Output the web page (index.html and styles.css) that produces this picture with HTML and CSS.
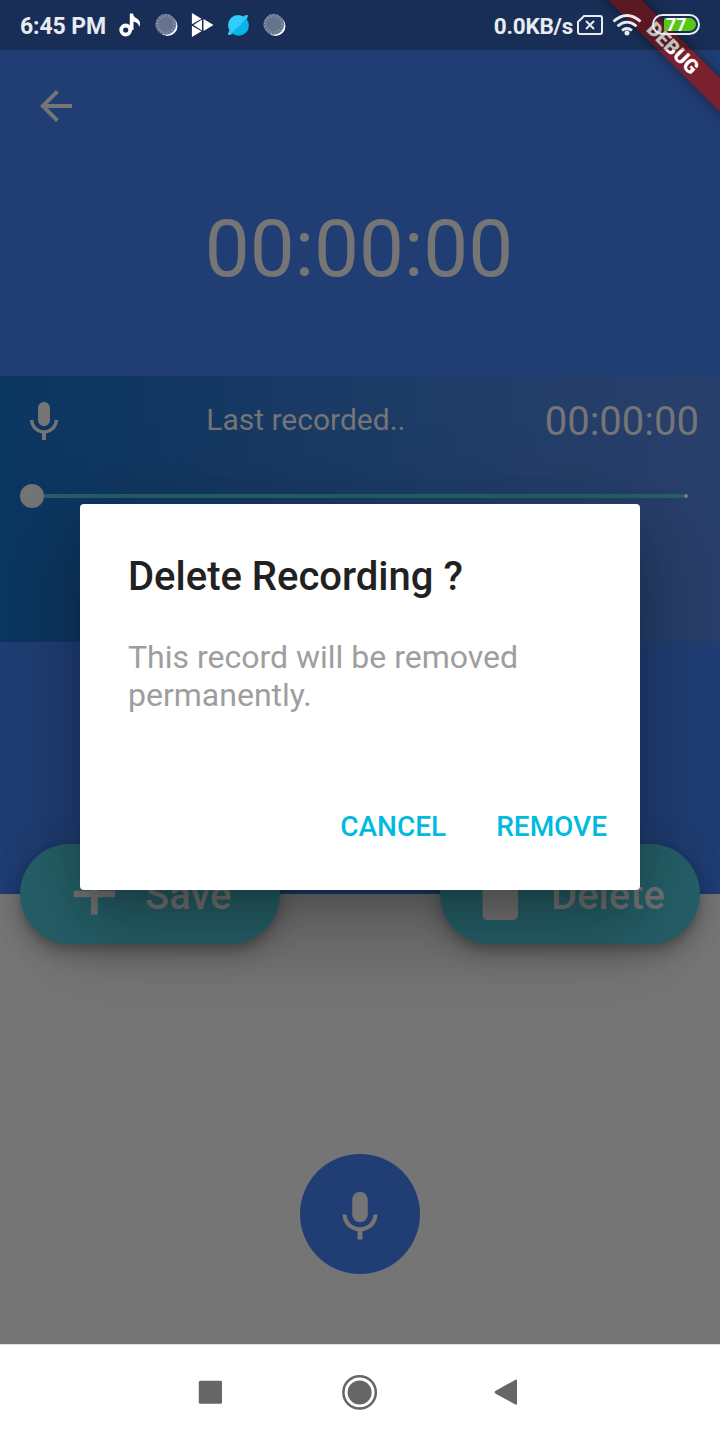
FILE: index.html
```html
<!DOCTYPE html>
<html lang="en">
<head>
<meta charset="utf-8">
<title>Recorder</title>
<link rel="stylesheet" href="styles.css">
</head>
<body>
<div class="phone">
  <main class="app">
    <header class="header">
      <svg class="back" width="48" height="48" viewBox="0 0 24 24"><path d="M20 11H7.83l5.59-5.59L12 4l-8 8 8 8 1.41-1.41L7.83 13H20v-2z"/></svg>
      <div class="timer">00:00:00</div>
    </header>
    <section class="player">
      <div class="player-row">
        <svg class="mic" width="48" height="48" viewBox="0 0 24 24"><path d="M12 14c1.66 0 2.99-1.34 2.99-3L15 5c0-1.66-1.34-3-3-3S9 3.34 9 5v6c0 1.66 1.34 3 3 3zm5.300-3c0 3-2.540 5.100-5.300 5.100S6.700 14 6.700 11H5c0 3.410 2.720 6.230 6 6.720V21h2v-3.280c3.280-.480 6-3.300 6-6.720h-1.700z"/></svg>
        <span class="caption">Last recorded..</span>
        <span class="length">00:00:00</span>
      </div>
      <div class="slider"><span class="thumb"></span><span class="track"></span><span class="tick"></span></div>
    </section>
    <div class="actions">
      <button class="pill save">
        <svg width="60" height="60" viewBox="0 0 24 24"><path d="M20.400 12.900h-6.900v7h-2.700v-7H3.900v-2.600h6.900v-7h2.700v7h6.900v2.600z"/></svg>
        <span>Save</span>
      </button>
      <button class="pill delete">
        <svg width="60" height="60" viewBox="0 0 24 24"><path d="M5 20c0 1.100.9 2 2 2h10.200c1.100 0 2-.9 2-2V7H5v13zM20 4h-3.500l-1-1h-5l-1 1H6v2h14V4z"/></svg>
        <span>Delete</span>
      </button>
    </div>
    <div class="record-area">
      <button class="record">
        <svg width="60" height="60" viewBox="0 0 24 24"><path d="M12 14.100c1.660 0 3.100-1.440 3.100-3.100V5c0-1.660-1.440-3.100-3.100-3.100S8.900 3.340 8.900 5v6c0 1.660 1.440 3.100 3.100 3.100zm5.300-3.100c0 3-2.540 5.100-5.300 5.100S6.700 14 6.700 11H5c0 3.410 2.720 6.230 6 6.720V21h2v-3.280c3.280-.480 6-3.300 6-6.720h-1.700z"/></svg>
      </button>
    </div>
  </main>
  <nav class="navbar">
    <svg width="24" height="24" viewBox="0 0 24 24"><rect x=".8" y=".8" width="23.200" height="23" rx="1.500"/></svg>
    <svg class="home" width="36" height="36" viewBox="0 0 36 36"><circle class="ring" cx="17.600" cy="18.400" r="16.200"/><circle cx="17.600" cy="18.400" r="12"/></svg>
    <svg width="24" height="26" viewBox="0 0 24 26"><path d="M21.500.7Q23 .2 23 1.300v23.600q0 1.100-1.500.6L1.300 14.500Q-.2 13.300 1.300 12.100z"/></svg>
  </nav>

  <div class="banner">DEBUG</div>

  <div class="statusbar">
    <span class="clock">6:45 PM</span>
    <div class="notices">
      <svg width="24" height="24" viewBox="0 0 24 24"><circle class="note" cx="6.700" cy="17" r="4.500"/><path d="M10.800.5h3.200c.4 2.500 1.600 3.700 3.500 4.800 2.500 1.400 3.700 3.300 3.500 6-.1 1.200-.4 1.900-.8 2.500-.5-2.800-2.700-4.800-5.700-5.300v8.500h-3.700z"/></svg>
      <svg width="24" height="24" viewBox="0 0 24 24"><circle cx="12.500" cy="13" r="10" class="moon"/><circle cx="10.800" cy="11.300" r="10.500" class="disc"/><circle cx="10.800" cy="11.300" r="8.500" class="dial"/></svg>
      <svg width="24" height="26" viewBox="0 0 24 26"><path d="M.9 1l9.600 5.700L.9 12.200zM.9 25l9.600-5.700-9.600-5.500zM12.500 7L22.500 13l-10 6zM11 7.500v11L2.500 13z"/></svg>
      <svg width="24" height="24" viewBox="0 0 24 24"><circle cx="11" cy="12" r="10" class="planet"/><path class="planet" d="M16 3.200l3.500-1.200h1.200v1.500L19.500 7zM6 20.800L2.500 22H1v-1.500L2.500 17z"/><path class="shade" d="M19 5.500A10 10 0 0 1 4.500 19.600Q12.500 14 19 5.500Z"/></svg>
      <svg width="24" height="24" viewBox="0 0 24 24"><circle cx="12.500" cy="13" r="10" class="moon"/><circle cx="10.800" cy="11.300" r="10.500" class="disc"/><circle cx="10.800" cy="11.300" r="8.500" class="dial"/></svg>
    </div>
    <span class="speed">0.0KB/s</span>
    <svg class="sim" width="26" height="20" viewBox="0 0 26 20"><path d="M7 1h16a2 2 0 0 1 2 2v14a2 2 0 0 1-2 2H3a2 2 0 0 1-2-2V7zM9 6l8 8M17 6l-8 8"/></svg>
    <svg class="wifi" width="30" height="22" viewBox="0 0 30 22"><path d="M1.500 7.500Q15-4.500 28.500 7.500M5.500 12.200Q15 4 24.500 12.200M10 16.500Q15 12.500 20 16.500"/><circle cx="15" cy="19" r="2.500"/></svg>
    <div class="battery"><span class="charge">77</span></div>
  </div>

  <div class="dialog" role="dialog">
    <h1>Delete Recording ?</h1>
    <p>This record will be removed permanently.</p>
    <div class="dialog-actions"><button>CANCEL</button><button>REMOVE</button></div>
  </div>
</div>
</body>
</html>
```
FILE: styles.css
```css
* { box-sizing: border-box; }
body { margin: 0; font-family: Roboto, sans-serif; }
button { border: 0; padding: 0; background: none; font: inherit; color: inherit; }
svg { display: block; flex: none; }

.phone { position: relative; width: 720px; height: 1440px; overflow: hidden; background: #fff; }

.app { isolation: isolate; display: flex; flex-direction: column; height: 1344px; background: #203e74; color: #757575; fill: #757575; }

.header { height: 376px; padding: 82px 32px 0; }
.timer { margin: 72px 0 0 -2px; font-size: 80px; line-height: 94px; text-align: center; }

.player { height: 266px; padding: 20px 20px 0; background: linear-gradient(90deg, #0a3660, #153862 30%, #1c3c66 55%, #233e68 75%, #293f6b); }
.player-row { display: flex; justify-content: space-between; align-items: center; height: 50px; }
.mic { margin-top: 2px; }
.caption { margin: -3px 1px 0 0; font-size: 30px; }
.length { margin-right: 1px; font-size: 40px; }
.slider { display: flex; align-items: center; height: 24px; margin: 38px 12px 0 0; }
.thumb { width: 24px; height: 24px; border-radius: 50%; background: #757575; }
.track { flex: 1; height: 4px; background: #26606a; }
.tick { width: 4px; height: 4px; border-radius: 50%; background: #7d8387; }

.actions { position: relative; z-index: 1; display: flex; flex: none; justify-content: space-between; height: 100px; margin-top: 202px; padding: 0 20px; background: linear-gradient(#203e74 50%, #757575 50%); }
.pill { display: flex; align-items: center; width: 260px; height: 100px; padding-top: 1px; border-radius: 50px; background: #266069; font-size: 40px; font-weight: 500; box-shadow: 0 6px 10px -2px rgba(0,0,0,.2), 0 12px 20px rgba(0,0,0,.14), 0 2px 36px rgba(0,0,0,.12); }
.pill span { padding-top: 1px; }
.save { padding-left: 44px; gap: 21px; }
.delete { padding-left: 30px; gap: 21px; }

.record-area { flex: 1; display: flex; justify-content: center; align-items: flex-start; padding-top: 210px; background: #757575; }
.record { display: flex; justify-content: center; align-items: center; width: 120px; height: 120px; padding-top: 5px; border-radius: 50%; background: #203e74; }

.navbar { display: flex; justify-content: space-between; align-items: center; height: 96px; padding: 0 202px 1px 198px; border-top: 1px solid #e0e0e0; fill: #666; }
.home { margin-left: 3px; overflow: visible; }
.ring { fill: none; stroke: #666; stroke-width: 2.500px; }

.banner { position: absolute; left: 573px; top: 36px; width: 200px; height: 24px; transform: rotate(45deg); background: #7b202e; color: #fff; font-size: 20px; font-weight: 900; line-height: 24px; text-align: center; box-shadow: 0 0 12px rgba(0,0,0,.5); }

.statusbar { position: absolute; inset: 0 0 auto; display: flex; align-items: center; height: 50px; padding: 0 20px; background: rgba(0,0,0,.25); color: #e8ebef; font-size: 23px; font-weight: 700; }
.clock { width: 86px; padding-top: 2px; white-space: nowrap; letter-spacing: -.1px; }
.notices { display: flex; align-items: center; gap: 12px; margin-left: 13px; fill: #fff; }
.note { fill: none; stroke: #fff; stroke-width: 3.800px; }
.moon { fill: #fff; }
.disc { fill: #66738e; }
.dial { fill: none; stroke: #8d97aa; stroke-width: 3px; stroke-dasharray: 1 2; }
.planet { fill: #30cdfa; }
.shade { fill: #08b5e9; }
.speed { margin-left: auto; padding-top: 2px; font-size: 22.500px; letter-spacing: -.25px; }
.sim { margin-left: 4px; fill: none; stroke: #e8ebef; stroke-width: 2px; }
.wifi { margin-left: 9px; fill: #e8ebef; }
.wifi path { fill: none; stroke: #e8ebef; stroke-width: 2.800px; }
.battery { display: flex; width: 48px; height: 21px; margin: -2px 0 0 10px; padding: 2px; border: 2px solid #e8ebef; border-radius: 11px; }
.charge { flex: 1; margin-left: 8px; padding-left: 2px; border-radius: 2px 7px 7px 2px; background: #59c718; color: #fff; font-size: 18px; font-weight: 700; line-height: 14px; }

.dialog { position: absolute; left: 80px; top: 504px; width: 560px; height: 386px; padding: 49px 48px 0; border-radius: 4px; background: #fff; box-shadow: 0 22px 30px -14px rgba(0,0,0,.2), 0 48px 76px 6px rgba(0,0,0,.14), 0 18px 92px 16px rgba(0,0,0,.12); }
.dialog h1 { margin: 0; color: #212121; font-size: 40px; line-height: 48px; font-weight: 500; }
.dialog p { margin: 37px 0 0; color: #9e9e9e; font-size: 32px; line-height: 38px; }
.dialog-actions { display: flex; justify-content: flex-end; gap: 50px; margin: 94px -15px 0 0; color: #00bae0; font-size: 28px; line-height: 38px; font-weight: 500; }
```
